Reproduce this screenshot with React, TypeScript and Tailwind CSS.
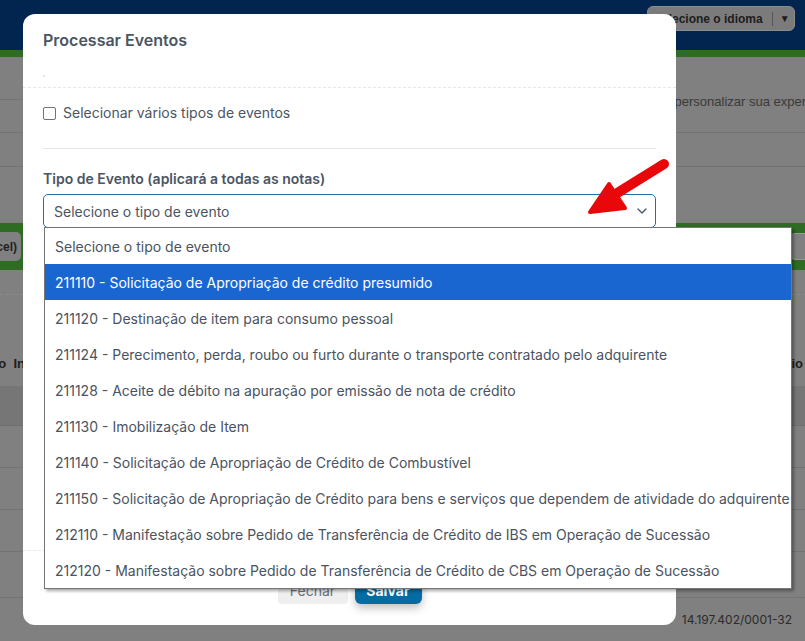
import { ChevronDown } from 'lucide-react';

const options = [
  'Selecione o tipo de evento',
  '211110 - Solicitação de Apropriação de crédito presumido',
  '211120 - Destinação de item para consumo pessoal',
  '211124 - Perecimento, perda, roubo ou furto durante o transporte contratado pelo adquirente',
  '211128 - Aceite de débito na apuração por emissão de nota de crédito',
  '211130 - Imobilização de Item',
  '211140 - Solicitação de Apropriação de Crédito de Combustível',
  '211150 - Solicitação de Apropriação de Crédito para bens e serviços que dependem de atividade do adquirente',
  '212110 - Manifestação sobre Pedido de Transferência de Crédito de IBS em Operação de Sucessão',
  '212120 - Manifestação sobre Pedido de Transferência de Crédito de CBS em Operação de Sucessão',
];

function BackgroundPage() {
  return (
    <div className="flex flex-col h-full font-['Liberation_Sans',Arial,sans-serif]">
      {/* top bar */}
      <div className="h-[50px] bg-[#01254f] flex justify-end items-start pt-[6px] pr-[10px]">
        <div className="h-[25px] w-[148px] rounded-[6px] bg-[#7b7b7b] border border-[#8c8c8c] flex items-center pl-[6px] whitespace-nowrap text-[12px] font-bold text-[#1d1d1d]">
          <span>Selecione o idioma</span>
          <span className="ml-[9px] h-[14px] w-px bg-[#555]" />
          <span className="ml-[7px] text-[10px]">▼</span>
        </div>
      </div>
      <div className="h-[7px] bg-[#2e6b23]" />

      {/* body */}
      <div className="flex-1 bg-[#808080] flex flex-col">
        <div className="h-[43px] border-b border-[#737373]" />
        <div className="h-[33px] border-b border-[#737373] flex items-start justify-end whitespace-nowrap text-[13px] text-[#3a3a3a]">
          <span className="mr-[-35px] -mt-[8px]">personalizar sua experiência</span>
        </div>
        <div className="h-[34px] border-b border-[#737373]" />
        <div className="h-[56px]" />
        <div className="h-[47px] bg-[#2e6b23] flex items-center justify-between">
          <div className="h-[29px] w-[120px] -ml-[99px] rounded-[5px] bg-[#808080] flex items-center justify-end pr-[4px] whitespace-nowrap text-[12px] font-bold text-[#222]">
            Exportar (Excel)
          </div>
          <div className="h-[27px] w-[40px] -mr-[25px] rounded-[5px] bg-[#808080] border border-[#999]" />
        </div>
        <div className="h-[25px] border-b border-dashed border-[#8a8a8a]" />
        <div className="h-[47px]" />
        <div className="h-[44px] flex items-center justify-between whitespace-nowrap text-[13px] font-bold text-[#1e1e1e]">
          <span className="-ml-[21px]">Tipo&nbsp;&nbsp;Info</span>
          <span className="mr-[2px]">Usuário</span>
        </div>
        <div className="h-[40px] bg-[#767676] border-b border-[#6f6f6f]" />
        <div className="h-[42px] border-b border-[#737373]" />
        <div className="h-[42px] border-b border-[#737373]" />
        <div className="h-[42px] border-b border-[#737373]" />
        <div className="h-[46px] border-b border-[#737373]" />
        <div className="flex-1 flex justify-end items-center pr-[13px] whitespace-nowrap text-[12px] text-[#2b2b2b] font-['Inter',sans-serif]">
          14.197.402/0001-32
        </div>
      </div>
    </div>
  );
}

function Dropdown() {
  return (
    <div className="absolute left-[1px] top-[33px] w-[748px] bg-white border border-[#767676] shadow-[2px_2px_3px_rgba(0,0,0,0.35)] z-20">
      {options.map((o, i) => (
        <div
          key={i}
          className={
            i === 1
              ? 'h-[36px] flex items-center pl-[10px] whitespace-nowrap text-[14px] bg-[#1a66d1] text-white'
              : 'h-[36px] flex items-center pl-[10px] whitespace-nowrap text-[14px] text-[#4a5361]'
          }
        >
          {o}
        </div>
      ))}
    </div>
  );
}

function Modal() {
  return (
    <div className="absolute left-[23px] top-[14px] w-[653px] h-[611px] bg-white rounded-[12px] flex flex-col font-['Inter',sans-serif] text-[#4b5563]">
      {/* header */}
      <div className="px-[20px] pt-[14px] pb-[10px] border-b border-dashed border-[#e5e7eb]">
        <h2 className="text-[16px] leading-[24px] font-semibold text-[#4b5563]">Processar Eventos</h2>
        <div className="mt-[23px] w-[2px] h-[2px] bg-[#e5e7eb]" />
      </div>

      {/* body */}
      <div className="flex-1 px-[20px]">
        <label className="flex items-center gap-[7px] pt-[15px] pb-[25px] border-b border-[#e5e7eb] text-[14px] leading-[20px]">
          <span className="w-[13px] h-[13px] rounded-[2px] border border-[#6b7280] bg-white shrink-0" />
          Selecionar vários tipos de eventos
        </label>
        <p className="mt-[20px] mb-[5px] text-[14px] leading-[20px] font-semibold">Tipo de Evento (aplicará a todas as notas)</p>
        <div className="relative">
          <div className="h-[34px] rounded-[5px] border border-[#2270a8] flex items-center justify-between pl-[10px] pr-[5px] text-[14px]">
            <span>Selecione o tipo de evento</span>
            <ChevronDown size={16} strokeWidth={2} className="text-[#4b5563]" />
          </div>
          <Dropdown />
        </div>
      </div>

      {/* footer */}
      <div className="border-t border-dashed border-[#e5e7eb] pt-[25px] pb-[21px] flex justify-center gap-[7px]">
        <button className="h-[28px] w-[70px] rounded-[4px] bg-[#efefef] text-[14px] text-[#6b7280]">Fechar</button>
        <button className="h-[28px] w-[67px] rounded-[6px] bg-[#056ba3] text-[14px] font-bold text-white shadow-[0_4px_8px_rgba(0,0,0,0.25)]">Salvar</button>
      </div>
    </div>
  );
}

function RedArrow() {
  return (
    <svg className="absolute left-0 top-0 z-30 pointer-events-none" width="805" height="641" viewBox="0 0 805 641">
      <line x1="664" y1="164" x2="606" y2="200" stroke="#e8080a" strokeWidth="10" strokeLinecap="round" />
      <polygon points="590,212 609,184 625,208" fill="#e8080a" stroke="#e8080a" strokeWidth="4" strokeLinejoin="round" />
    </svg>
  );
}

export default function App() {
  return (
    <div className="relative w-[805px] h-[641px] overflow-hidden bg-[#808080]">
      <BackgroundPage />
      <Modal />
      <RedArrow />
    </div>
  );
}
